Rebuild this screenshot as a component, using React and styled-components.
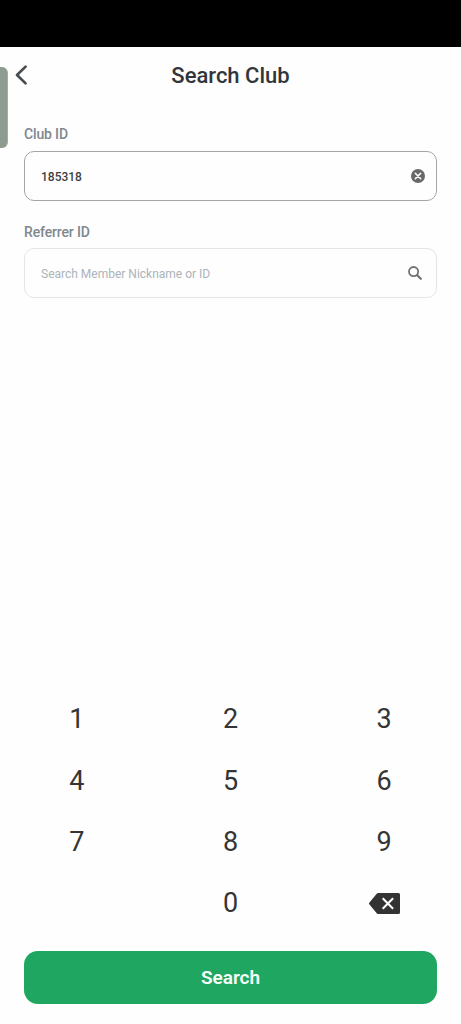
import React, { useState } from 'react';
import styled, { createGlobalStyle } from 'styled-components';

const GlobalStyle = createGlobalStyle`
	* {
		box-sizing: border-box;
	}
	body {
		margin: 0;
		background: #fefefe;
		font-family: Roboto, sans-serif;
	}
	button {
		font-family: inherit;
		border: none;
		background: none;
		padding: 0;
		cursor: pointer;
	}
`;

const Wrapper = styled.div`
	position: relative;
	display: flex;
	flex-direction: column;
	width: 100%;
	height: 1024px;
	overflow: hidden;
`;
const StatusBar = styled.div`
	height: 47px;
	flex-shrink: 0;
	background: #000;
`;
/* drawer handle over the left edge of the screen */
const EdgeHandle = styled.div`
	position: absolute;
	top: 67px;
	left: 0;
	width: 8px;
	height: 81px;
	background: #8e9b91;
	border-right: 1px solid #9fb19c;
	border-radius: 0 6px 6px 0;
`;
const Header = styled.header`
	display: grid;
	grid-template-columns: 48px 1fr 48px;
	align-items: center;
	height: 56px;
	flex-shrink: 0;
`;
const BackButton = styled.button`
	display: flex;
	padding-left: 14px;
`;
const Title = styled.h1`
	margin: 0;
	padding-top: 2px;
	font-size: 22px;
	line-height: 28px;
	font-weight: 500;
	color: #32363b;
	text-align: center;
`;
const Form = styled.div`
	display: flex;
	flex-direction: column;
	gap: 21px;
	padding: 22px 24px 0;
`;
const Field = styled.div`
	display: flex;
	flex-direction: column;
	gap: 7px;

	& + & {
		gap: 6px;
		padding-top: 1px;
	}
`;
const Label = styled.span`
	font-size: 14px;
	line-height: 19px;
	font-weight: 500;
	letter-spacing: -0.15px;
	color: #80878d;
`;
const InputBox = styled.div`
	display: flex;
	align-items: center;
	justify-content: space-between;
	height: 50px;
	padding: 0 ${(props) => (props.$active ? 11 : 14)}px 0 16px;
	border: 1px solid ${(props) => (props.$active ? '#a3a5a7' : '#e4e5e7')};
	border-radius: 10px;
`;
const Value = styled.span`
	padding-top: 1px;
	font-size: 12px;
	font-weight: 500;
	color: #3c3e40;
`;
const Placeholder = styled.span`
	padding-top: 1px;
	font-size: 12px;
	color: #acb3ba;
`;
const IconButton = styled.button`
	display: flex;
`;
const Keypad = styled.div`
	display: grid;
	grid-template-columns: repeat(3, 1fr);
	grid-auto-rows: 61.4px;
	margin-top: auto;
`;
const Key = styled.button`
	display: flex;
	align-items: center;
	justify-content: center;
	font-size: 27px;
	color: #353535;
`;
const Footer = styled.div`
	padding: 17px 24px 20px;
`;
const SearchButton = styled.button`
	display: block;
	width: 100%;
	height: 53px;
	border-radius: 14px;
	background: #1fa660;
	color: #f6fffa;
	font-size: 19px;
	font-weight: 600;
`;

const BackIcon = () => (
	<svg width='15' height='22' viewBox='0 0 15 22' fill='none'>
		<path d='M11.6 2.6L3 11l8.6 8.4' stroke='#4a4d50' strokeWidth='2.7' strokeLinecap='round' strokeLinejoin='round' />
	</svg>
);

const ClearIcon = () => (
	<svg width='14' height='14' viewBox='0 0 14 14'>
		<circle cx='7' cy='7' r='7' fill='#66686a' />
		<path d='M4.3 4.3l5.4 5.4M9.7 4.3l-5.4 5.4' stroke='#fff' strokeWidth='1.6' strokeLinecap='round' />
	</svg>
);

const MagnifierIcon = () => (
	<svg width='14' height='14' viewBox='0 0 14 14' fill='none' stroke='#707274'>
		<circle cx='5.6' cy='5.6' r='4.6' strokeWidth='1.8' />
		<path d='M9.2 9.2l3.6 3.6' strokeWidth='2.2' strokeLinecap='round' />
	</svg>
);

const BackspaceIcon = () => (
	<svg width='31' height='21' viewBox='0 0 31 21'>
		<path d='M9.3 0H29.5a1.5 1.5 0 0 1 1.5 1.5v18a1.5 1.5 0 0 1-1.5 1.5H9.3a2 2 0 0 1-1.4-.6L.5 11.6a1.6 1.6 0 0 1 0-2.2L7.9.6A2 2 0 0 1 9.3 0z' fill='#333' />
		<path d='M13.7 5.2l10.4 10.6M24.1 5.2L13.7 15.8' stroke='#fff' strokeWidth='2' />
	</svg>
);

const digits = ['1', '2', '3', '4', '5', '6', '7', '8', '9'];

const App = () => {
	const [clubId, setClubId] = useState('185318');

	const press = (digit) => setClubId((id) => id + digit);

	return (
		<Wrapper>
			<GlobalStyle />
			<StatusBar />
			<EdgeHandle />
			<Header>
				<BackButton aria-label='Back'>
					<BackIcon />
				</BackButton>
				<Title>Search Club</Title>
			</Header>
			<Form>
				<Field>
					<Label>Club ID</Label>
					<InputBox $active>
						<Value>{clubId}</Value>
						<IconButton aria-label='Clear' onClick={() => setClubId('')}>
							<ClearIcon />
						</IconButton>
					</InputBox>
				</Field>
				<Field>
					<Label>Referrer ID</Label>
					<InputBox>
						<Placeholder>Search Member Nickname or ID</Placeholder>
						<IconButton aria-label='Find member'>
							<MagnifierIcon />
						</IconButton>
					</InputBox>
				</Field>
			</Form>
			<Keypad>
				{digits.map((digit) => (
					<Key key={digit} onClick={() => press(digit)}>
						{digit}
					</Key>
				))}
				<span />
				<Key onClick={() => press('0')}>0</Key>
				<Key aria-label='Delete' onClick={() => setClubId((id) => id.slice(0, -1))}>
					<BackspaceIcon />
				</Key>
			</Keypad>
			<Footer>
				<SearchButton>Search</SearchButton>
			</Footer>
		</Wrapper>
	);
};

export default App;
